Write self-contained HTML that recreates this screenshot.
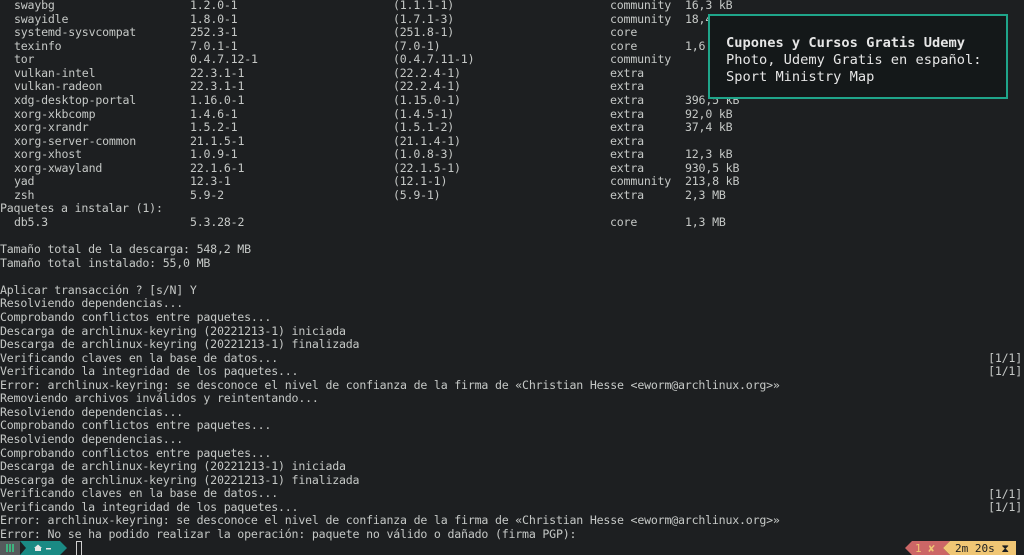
<!DOCTYPE html>
<html><head><meta charset="utf-8"><style>
html,body{margin:0;padding:0;background:#1d1f21;width:1024px;height:555px;overflow:hidden;position:relative}
pre,.r,.t span{font-family:"DejaVu Sans Mono","Liberation Mono",monospace;font-size:11.6px;line-height:13.57px;color:#c5c8c6;white-space:pre;letter-spacing:-0.2px}
pre{position:absolute;left:0;top:-1px;margin:0}
.r{position:absolute;right:2px}
.t{position:absolute;left:0;width:1024px;height:14px}
.t span{position:absolute;top:0}
.t span:nth-child(1){left:14px}.t span:nth-child(2){left:190px}.t span:nth-child(3){left:393px}.t span:nth-child(4){left:610px}.t span:nth-child(5){left:685px}
.pop{position:absolute;left:708px;top:14px;width:296px;height:81px;border:2px solid #1fa58a;background:#141819;box-sizing:content-box}
.pop div{position:absolute;left:16px;top:19px;font-family:"DejaVu Sans Mono","Liberation Mono",monospace;font-size:13.7px;line-height:17px;color:#e6e6e6;white-space:pre}
</style></head><body>
<div class="t" style="top:-1px"><span>swaybg</span><span>1.2.0-1</span><span>(1.1.1-1)</span><span>community</span><span>16,3 kB</span></div>
<div class="t" style="top:12.57px"><span>swayidle</span><span>1.8.0-1</span><span>(1.7.1-3)</span><span>community</span><span>18,4 kB</span></div>
<div class="t" style="top:26.14px"><span>systemd-sysvcompat</span><span>252.3-1</span><span>(251.8-1)</span><span>core</span></div>
<div class="t" style="top:39.71px"><span>texinfo</span><span>7.0.1-1</span><span>(7.0-1)</span><span>core</span><span>1,6 MB</span></div>
<div class="t" style="top:53.28px"><span>tor</span><span>0.4.7.12-1</span><span>(0.4.7.11-1)</span><span>community</span></div>
<div class="t" style="top:66.85px"><span>vulkan-intel</span><span>22.3.1-1</span><span>(22.2.4-1)</span><span>extra</span></div>
<div class="t" style="top:80.42px"><span>vulkan-radeon</span><span>22.3.1-1</span><span>(22.2.4-1)</span><span>extra</span></div>
<div class="t" style="top:93.99px"><span>xdg-desktop-portal</span><span>1.16.0-1</span><span>(1.15.0-1)</span><span>extra</span><span>396,5 kB</span></div>
<div class="t" style="top:107.56px"><span>xorg-xkbcomp</span><span>1.4.6-1</span><span>(1.4.5-1)</span><span>extra</span><span>92,0 kB</span></div>
<div class="t" style="top:121.13px"><span>xorg-xrandr</span><span>1.5.2-1</span><span>(1.5.1-2)</span><span>extra</span><span>37,4 kB</span></div>
<div class="t" style="top:134.7px"><span>xorg-server-common</span><span>21.1.5-1</span><span>(21.1.4-1)</span><span>extra</span></div>
<div class="t" style="top:148.27px"><span>xorg-xhost</span><span>1.0.9-1</span><span>(1.0.8-3)</span><span>extra</span><span>12,3 kB</span></div>
<div class="t" style="top:161.84px"><span>xorg-xwayland</span><span>22.1.6-1</span><span>(22.1.5-1)</span><span>extra</span><span>930,5 kB</span></div>
<div class="t" style="top:175.41px"><span>yad</span><span>12.3-1</span><span>(12.1-1)</span><span>community</span><span>213,8 kB</span></div>
<div class="t" style="top:188.98px"><span>zsh</span><span>5.9-2</span><span>(5.9-1)</span><span>extra</span><span>2,3 MB</span></div>
<div class="t" style="top:216.12px"><span>db5.3</span><span>5.3.28-2</span><span></span><span>core</span><span>1,3 MB</span></div>
<pre>
 














Paquetes a instalar (1):


Tamaño total de la descarga: 548,2 MB
Tamaño total instalado: 55,0 MB

Aplicar transacción ? [s/N] Y
Resolviendo dependencias...
Comprobando conflictos entre paquetes...
Descarga de archlinux-keyring (20221213-1) iniciada
Descarga de archlinux-keyring (20221213-1) finalizada
Verificando claves en la base de datos...
Verificando la integridad de los paquetes...
Error: archlinux-keyring: se desconoce el nivel de confianza de la firma de «Christian Hesse &lt;eworm@archlinux.org&gt;»
Removiendo archivos inválidos y reintentando...
Resolviendo dependencias...
Comprobando conflictos entre paquetes...
Resolviendo dependencias...
Comprobando conflictos entre paquetes...
Descarga de archlinux-keyring (20221213-1) iniciada
Descarga de archlinux-keyring (20221213-1) finalizada
Verificando claves en la base de datos...
Verificando la integridad de los paquetes...
Error: archlinux-keyring: se desconoce el nivel de confianza de la firma de «Christian Hesse &lt;eworm@archlinux.org&gt;»
Error: No se ha podido realizar la operación: paquete no válido o dañado (firma PGP):</pre>
<div class="r" style="top:351.8px">[1/1]</div>
<div class="r" style="top:365.4px">[1/1]</div>
<div class="r" style="top:487.5px">[1/1]</div>
<div class="r" style="top:501.1px">[1/1]</div>
<div class="pop"><div><b>Cupones y Cursos Gratis Udemy</b>
Photo, Udemy Gratis en español:
Sport Ministry Map</div></div>
<svg style="position:absolute;left:0;top:541px" width="1024" height="14">
<rect x="0" y="0" width="20" height="14" fill="#555a5c"/>
<rect x="6" y="3" width="2" height="8" fill="#3fb27f"/><rect x="9" y="3" width="2" height="8" fill="#3fb27f"/><rect x="12" y="3" width="2" height="8" fill="#3fb27f"/>
<polygon points="20,0 60,0 67,7 60,14 20,14 26,7" fill="#1a8a84"/>
<polygon points="34,7 38,3.5 42,7 41,7 41,10 35,10 35,7" fill="#e8e8e8"/>
<rect x="46" y="7" width="5" height="1.5" fill="#e8e8e8"/>
<rect x="76" y="0" width="6" height="14" fill="#d0d0d0"/><rect x="77" y="1" width="4" height="13" fill="#1d1f21"/>
<polygon points="912,0 950,0 943,7 950,14 912,14 905,7" fill="#cc6666"/>
<polygon points="950,0 1016,0 1016,14 950,14 943,7" fill="#f0c674"/>
<text x="915" y="11" font-family="DejaVu Sans Mono,monospace" font-size="11" fill="#f0c674">1 ✘</text>
<text x="955" y="11" font-family="DejaVu Sans Mono,monospace" font-size="11" fill="#1d1f21">2m 20s ⧗</text>
</svg>
</body></html>
